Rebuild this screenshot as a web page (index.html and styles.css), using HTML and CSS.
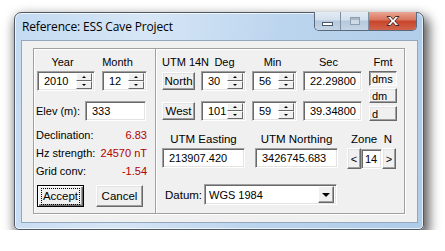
FILE: index.html
```html
<!DOCTYPE html>
<html lang="en">
<head>
    <meta charset="UTF-8">
    <title>Reference: ESS Cave Project</title>
    <link rel="stylesheet" href="styles.css">
</head>
<body>
    <div class="window">
        <div class="titlebar">
            <span class="title">Reference: ESS Cave Project</span>
            <div class="caption">
                <span class="cap min"><i></i></span>
                <span class="cap max"><i></i></span>
                <span class="cap close">
                    <svg width="18" height="12" viewBox="0 0 18 12">
                        <path d="M3 1.5h3.5l2.5 3 2.5-3H15l-4.2 4.5L15 10.5h-3.5L9 7.5l-2.5 3H3l4.2-4.5z" fill="#fff" stroke="#4a2a24" stroke-width="1" stroke-linejoin="round"/>
                    </svg>
                </span>
            </div>
        </div>
        <div class="client">
            <div class="group">
                <!-- date / location panel -->
                <div class="left">
                    <div class="hdr">
                        <span class="h-year">Year</span>
                        <span class="h-month">Month</span>
                    </div>
                    <div class="row">
                        <div class="field spin w-year">
                            <span class="val">2010</span>
                            <span class="arrows"><b class="up"></b><b class="down"></b></span>
                        </div>
                        <div class="field spin w-month">
                            <span class="val">12</span>
                            <span class="arrows"><b class="up"></b><b class="down"></b></span>
                        </div>
                    </div>
                    <div class="row elev">
                        <span class="lbl">Elev (m):</span>
                        <div class="field w-elev"><span class="val">333</span></div>
                    </div>
                    <div class="info first"><span>Declination:</span><span class="red">6.83</span></div>
                    <div class="info"><span>Hz strength:</span><span class="red">24570 nT</span></div>
                    <div class="info"><span>Grid conv:</span><span class="red">-1.54</span></div>
                    <div class="buttons">
                        <span class="btn default"><span class="focus">Accept</span></span>
                        <span class="btn">Cancel</span>
                    </div>
                </div>

                <!-- coordinates panel -->
                <div class="right">
                    <div class="hdr">
                        <span class="h-utm">UTM 14N</span>
                        <span class="h-deg">Deg</span>
                        <span class="h-min">Min</span>
                        <span class="h-sec">Sec</span>
                        <span class="h-fmt">Fmt</span>
                    </div>
                    <div class="coords">
                        <div class="coord-rows">
                            <div class="row">
                                <span class="btn dir">North</span>
                                <div class="field spin w-deg">
                                    <span class="val">30</span>
                                    <span class="arrows"><b class="up"></b><b class="down"></b></span>
                                </div>
                                <div class="field spin w-deg">
                                    <span class="val">56</span>
                                    <span class="arrows"><b class="up"></b><b class="down"></b></span>
                                </div>
                                <div class="field w-sec"><span class="val">22.29800</span></div>
                            </div>
                            <div class="row second">
                                <span class="btn dir">West</span>
                                <div class="field spin w-deg">
                                    <span class="val">101</span>
                                    <span class="arrows"><b class="up"></b><b class="down"></b></span>
                                </div>
                                <div class="field spin w-deg">
                                    <span class="val">59</span>
                                    <span class="arrows"><b class="up"></b><b class="down"></b></span>
                                </div>
                                <div class="field w-sec"><span class="val">39.34800</span></div>
                            </div>
                        </div>
                        <div class="fmt">
                            <span class="btn fmt-btn pressed">dms</span>
                            <span class="btn fmt-btn">dm</span>
                            <span class="btn fmt-btn">d</span>
                        </div>
                    </div>
                    <div class="utm">
                        <div class="col c-east">
                            <span class="col-lbl">UTM Easting</span>
                            <div class="field"><span class="val">213907.420</span></div>
                        </div>
                        <div class="col c-north">
                            <span class="col-lbl">UTM Northing</span>
                            <div class="field"><span class="val">3426745.683</span></div>
                        </div>
                        <div class="col c-zone">
                            <span class="col-lbl">Zone&nbsp;&nbsp;N</span>
                            <div class="zone">
                                <span class="btn zbtn">&lt;</span>
                                <div class="field zval"><span class="val">14</span></div>
                                <span class="btn zbtn">&gt;</span>
                            </div>
                        </div>
                    </div>
                    <div class="datum">
                        <span class="lbl">Datum:</span>
                        <div class="field select">
                            <span class="val">WGS 1984</span>
                            <span class="drop"><b class="down"></b></span>
                        </div>
                    </div>
                </div>
            </div>
        </div>
    </div>
</body>
</html>
```

FILE: styles.css
```css
/* Basic page styling */
* {
    box-sizing: border-box;
}

body {
    margin: 0;
    padding: 0;
    background: #fff;
    font-family: "Liberation Sans", Arial, sans-serif;
    font-size: 11px;
    color: #000;
}

/* Window frame */
.window {
    margin: 12px 0 0 14px;
    width: 410px;
    height: 218px;
    border: 1px solid #4f5a66;
    border-radius: 7px 7px 5px 5px;
    background: linear-gradient(100deg, #c3daf1 0%, #d6e6f6 30%, #bcd5ee 60%, #aecbe8 100%);
    box-shadow: inset 0 0 0 1px rgba(255, 255, 255, 0.7), 3px 6px 12px 2px rgba(0, 0, 0, 0.65);
    padding: 0 5px 6px 6px;
    display: flex;
    flex-direction: column;
}

.titlebar {
    height: 27px;
    display: flex;
    align-items: flex-start;
    justify-content: space-between;
}

.title {
    font-family: "Open Sans", "Noto Sans", sans-serif;
    font-size: 12px;
    margin: 5px 0 0 1px;
    letter-spacing: -0.15px;
}

.caption {
    display: flex;
    margin-top: -1px;
    margin-right: 1px;
    height: 19px;
    border: 1px solid #5a6a7c;
    border-top: none;
    border-radius: 0 0 5px 5px;
    overflow: hidden;
}

.cap {
    display: flex;
    align-items: center;
    justify-content: center;
    height: 100%;
    width: 26px;
    background: linear-gradient(#e4ecf5 0%, #d2dfec 45%, #b6c8dc 50%, #c5d5e6 100%);
    border-right: 1px solid #7f90a3;
}

.cap.max {
    width: 28px;
}

.cap.close {
    width: 47px;
    border-right: none;
    background: linear-gradient(#e9a695 0%, #d9735c 45%, #c8442b 50%, #d0644b 100%);
}

.cap.min i {
    display: block;
    width: 11px;
    height: 4px;
    margin-top: 5px;
    background: #fff;
    border: 1px solid #4b5a6b;
}

.cap.max i {
    display: block;
    width: 10px;
    height: 8px;
    border: 1px solid #8e9fb2;
    box-shadow: inset 0 2px 0 #a9b8c8, inset 0 0 0 3px #cfdae6;
}

/* Client area */
.client {
    flex: 1;
    background: #f0f0f0;
    border: 1px solid #93a7bd;
    padding: 7px 0 0 11px;
}

.group {
    width: 372px;
    height: 166px;
    border: 1px solid #a0a0a0;
    box-shadow: inset 1px 1px 0 #fff, 1px 1px 0 #fff;
    display: flex;
}

.left {
    width: 122px;
    border-right: 1px solid #a0a0a0;
    box-shadow: 1px 0 0 #fff;
    padding-top: 6px;
}

.right {
    flex: 1;
    margin-left: 1px;
    padding-top: 6px;
}

.hdr {
    display: flex;
    height: 14px;
    line-height: 14px;
    margin-bottom: 2px;
}

.hdr span {
    display: block;
    text-align: center;
    white-space: nowrap;
}

.h-year { margin-left: 3px; width: 51px; }
.h-month { margin-left: 14px; width: 31px; }

.h-utm { margin-left: 5px; width: 46px; }
.h-deg { margin-left: 4px; width: 25px; }
.h-min { margin-left: 20px; width: 31px; }
.h-sec { margin-left: 25px; width: 31px; }
.h-fmt { margin-left: 25px; width: 28px; }

.row {
    display: flex;
    align-items: center;
    height: 20px;
}

/* Sunken edit field */
.field {
    height: 20px;
    background: #fff;
    border: 1px solid;
    border-color: #a0a0a0 #fff #fff #a0a0a0;
    box-shadow: inset 1px 1px 0 #696969, inset -1px -1px 0 #e3e3e3;
    display: flex;
    align-items: center;
    padding: 2px;
}

.val {
    flex: 1;
    padding-left: 4px;
    line-height: 14px;
    white-space: nowrap;
    overflow: hidden;
}

.spin .arrows {
    display: flex;
    flex-direction: column;
    width: 16px;
    height: 16px;
}

.spin .arrows b {
    flex: 1;
    background: #f0f0f0;
    border: 1px solid;
    border-color: #fff #696969 #696969 #fff;
}

b.up,
b.down {
    display: flex;
    align-items: center;
    justify-content: center;
}

b.up::after,
b.down::after {
    content: "";
    display: block;
    width: 0;
    height: 0;
    border-left: 2px solid transparent;
    border-right: 2px solid transparent;
}

b.up::after {
    border-bottom: 2px solid #000;
}

b.down::after {
    border-top: 2px solid #000;
}

.w-year { margin-left: 3px; width: 58px; }
.w-month { margin-left: 7px; width: 45px; }

.left .row .field + .field {
    margin-left: 7px;
}

.left .row .field:first-child {
    margin-left: 3px;
}

.elev {
    margin-top: 10px;
}

.elev .lbl {
    margin-left: 2px;
    width: 49px;
}

.w-elev {
    width: 61px;
}

.info {
    display: flex;
    justify-content: space-between;
    height: 18px;
    line-height: 18px;
    margin-left: 2px;
    width: 111px;
}

.info.first {
    margin-top: 5px;
}

.red {
    color: #b00000;
}

/* Raised buttons */
.btn {
    display: flex;
    align-items: center;
    justify-content: center;
    background: #f0f0f0;
    border: 1px solid;
    border-color: #fff #696969 #696969 #fff;
    box-shadow: inset -1px -1px 0 #a0a0a0, inset 1px 1px 0 #e3e3e3;
    font-size: 11px;
    white-space: nowrap;
}

.buttons {
    display: flex;
    margin: 5px 0 0 3px;
    gap: 12px;
}

.buttons .btn {
    width: 47px;
    height: 22px;
    font-size: 11.5px;
}

.btn.default {
    border: 1px solid #000;
    box-shadow: inset 1px 1px 0 #fff, inset -1px -1px 0 #696969, inset -2px -2px 0 #a0a0a0;
}

.focus {
    border: 1px dotted #000;
    padding: 1px 1px;
    line-height: 13px;
}

.coords {
    display: flex;
}

.coord-rows .row .btn.dir {
    margin-left: 5px;
    width: 33px;
    height: 18px;
    font-size: 11.5px;
}

.w-deg {
    margin-left: 6px;
    width: 45px;
}

.w-sec {
    margin-left: 6px;
    width: 59px;
}

.row.second {
    margin-top: 10px;
}

.fmt {
    margin-left: 7px;
    width: 28px;
    display: flex;
    flex-direction: column;
}

.fmt-btn {
    height: 15px;
    justify-content: flex-start;
    padding-left: 2px;
    margin-top: 2px;
}

.fmt-btn:first-child {
    margin-top: 0;
}

.fmt-btn:last-child {
    margin-top: 3px;
}

.fmt-btn.pressed {
    border-color: #696969 #fff #fff #696969;
    box-shadow: inset 1px 1px 0 #a0a0a0;
    background: #f4f4f4;
}

.utm {
    display: flex;
    margin-top: 11px;
}

.col {
    display: flex;
    flex-direction: column;
    align-items: center;
}

.col-lbl {
    height: 14px;
    line-height: 14px;
    margin-bottom: 2px;
    white-space: nowrap;
    font-size: 11.5px;
}

.c-east { margin-left: 5px; width: 83px; }
.c-north { margin-left: 10px; width: 83px; }
.c-zone { margin-left: 9px; width: 49px; }

.col .field {
    width: 100%;
}

.zone {
    display: flex;
    align-items: flex-end;
    width: 100%;
}

.zbtn {
    width: 14px;
    height: 21px;
}

.field.zval {
    width: 21px;
    padding: 2px 0;
}

.zval .val {
    padding-left: 3px;
}

.datum {
    display: flex;
    align-items: center;
    margin-top: 15px;
}

.datum .lbl {
    margin-left: 8px;
    width: 39px;
    font-size: 11.5px;
}

.select {
    width: 133px;
    height: 21px;
}

.select .val {
    padding-left: 2px;
}

.drop {
    width: 16px;
    height: 17px;
    display: flex;
    align-items: center;
    justify-content: center;
    background: #f0f0f0;
    border: 1px solid;
    border-color: #fff #696969 #696969 #fff;
    box-shadow: inset -1px -1px 0 #a0a0a0;
}

.drop b.down::after {
    border-left-width: 4px;
    border-right-width: 4px;
    border-top-width: 4px;
}
```
